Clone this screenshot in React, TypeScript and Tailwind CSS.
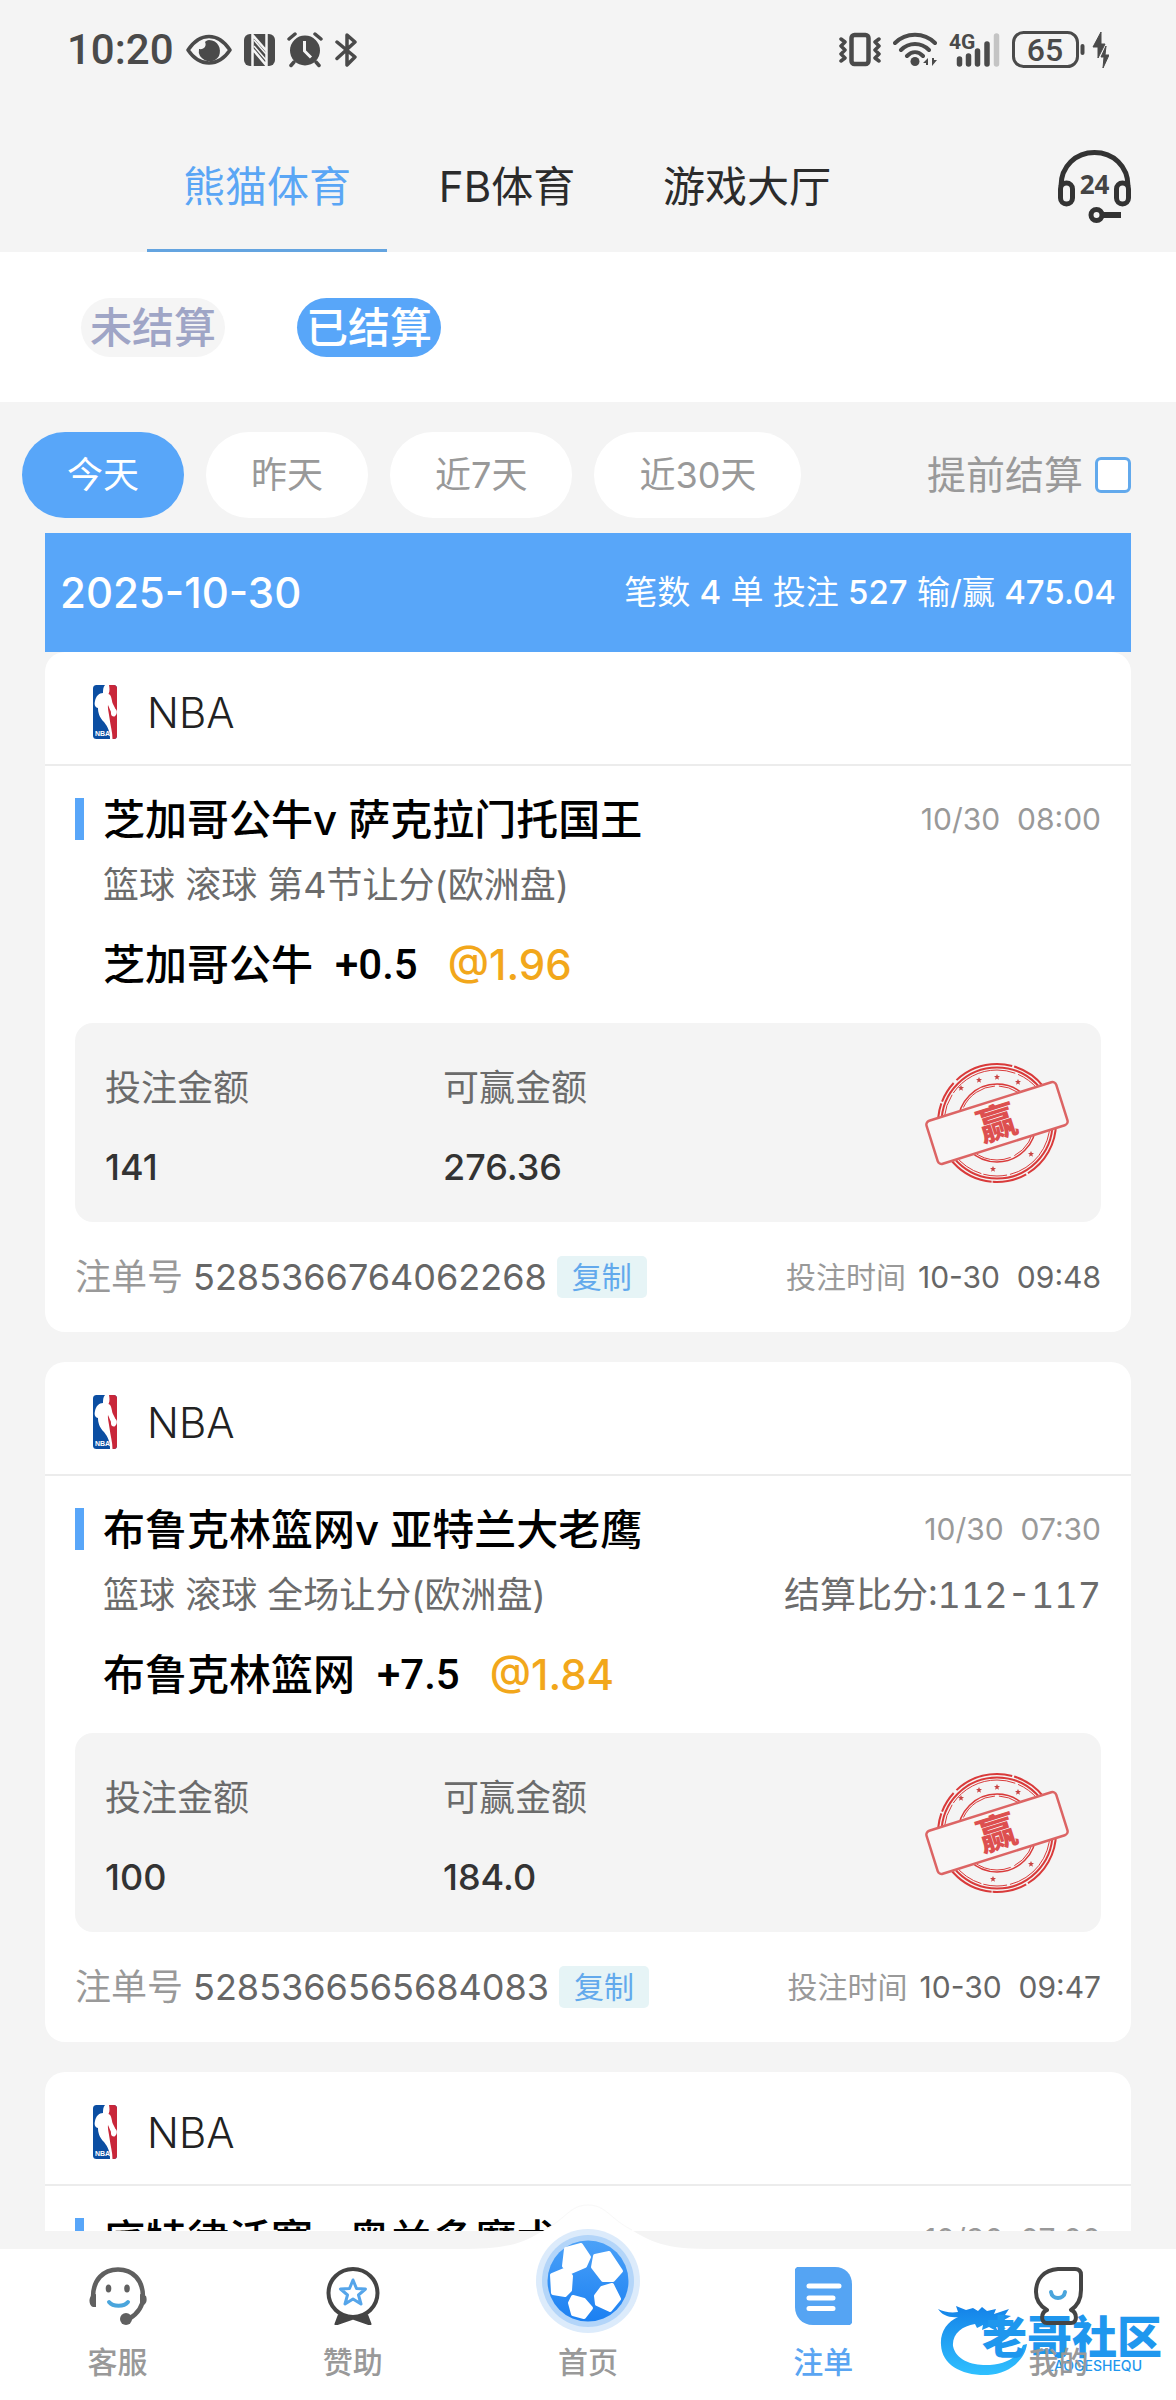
import type { ReactNode } from 'react'
import clsx from 'clsx'

interface Bet {
  id: string
  match: string
  matchTime: string
  market: string
  score?: string
  pick: string
  handicap: string
  odds: string
  stake: string
  payout: string
  placedAt: string
}

const BETS: Bet[] = [
  {
    id: '5285366764062268',
    match: '芝加哥公牛v 萨克拉门托国王',
    matchTime: '10/30  08:00',
    market: '篮球 滚球 第4节让分(欧洲盘)',
    pick: '芝加哥公牛',
    handicap: '+0.5',
    odds: '@1.96',
    stake: '141',
    payout: '276.36',
    placedAt: '10-30  09:48',
  },
  {
    id: '5285366565684083',
    match: '布鲁克林篮网v 亚特兰大老鹰',
    matchTime: '10/30  07:30',
    market: '篮球 滚球 全场让分(欧洲盘)',
    score: '结算比分:112-117',
    pick: '布鲁克林篮网',
    handicap: '+7.5',
    odds: '@1.84',
    stake: '100',
    payout: '184.0',
    placedAt: '10-30  09:47',
  },
]

const TABS = ['熊猫体育', 'FB体育', '游戏大厅']
const RANGES = ['今天', '昨天', '近7天', '近30天']

/* ---------- status bar ---------- */

function StatusBar() {
  return (
    <div className="flex h-[100px] shrink-0 items-center justify-between px-[67px] text-[#4a4a4a]">
      <div className="flex items-center gap-3">
        <span className="font-[Roboto] text-[42px] leading-none font-medium">10:20</span>
        <svg className="h-10 w-[46px]" viewBox="0 0 46 40" fill="none">
          <path d="M2 20C8 11 15 6.500 23 6.500S38 11 44 20C38 29 31 33 23 33S8 29 2 20Z" stroke="currentColor" strokeWidth="3.500" strokeLinejoin="round" />
          <path d="M19 12c2 4-1 8-6 7a10 10 0 0 0 1 7c5 7 15 7 19 0 3-7-1-16-10-16-2 0-3 1-4 2Z" fill="currentColor" />
        </svg>
        <svg className="h-10 w-[31px]" viewBox="0 0 31 40">
          <rect x="0" y="4" width="31" height="32" rx="6" fill="currentColor" />
          <path d="M8.500 36V5L23 21.500M22.500 4V35.500L8.500 19" stroke="#f4f4f4" strokeWidth="2.500" fill="none" />
          <path d="M10 10l12 14M10 16l12 14" stroke="#f4f4f4" strokeWidth="1.500" />
        </svg>
        <svg className="h-10 w-9" viewBox="0 0 36 40" fill="none">
          <circle cx="18" cy="20.500" r="15" fill="currentColor" />
          <path d="M2 9l6-5M34 9l-6-5M7 32l-3 3.500M29 32l3 3.500" stroke="currentColor" strokeWidth="3.500" strokeLinecap="round" />
          <path d="M17.500 11v10l6.500 6.500" stroke="#f4f4f4" strokeWidth="3" />
        </svg>
        <svg className="h-10 w-[22px]" viewBox="0 0 22 40" fill="none">
          <path d="M2 12l18 15-8 8V5l8 7L2 28.500" stroke="currentColor" strokeWidth="3.500" strokeLinecap="round" strokeLinejoin="round" />
        </svg>
      </div>

      <div className="flex items-center gap-3">
        <svg className="h-10 w-[42px]" viewBox="0 0 42 40" fill="none" stroke="currentColor">
          <rect x="12.500" y="5" width="17" height="29" rx="3" strokeWidth="4.500" />
          <path d="M2 9l4 3-4 4 4 4-4 4 4 4-4 3M40 9l-4 3 4 4-4 4 4 4-4 4 4 3" strokeWidth="3.500" strokeLinejoin="round" strokeLinecap="round" />
        </svg>
        <svg className="h-10 w-11" viewBox="0 0 44 40" fill="none">
          <path d="M2 13C13 2 31 2 42 13M8 20c8-8 20-8 28 0M14 26c5-5 11-5 16 0" stroke="currentColor" strokeWidth="4" strokeLinecap="round" />
          <circle cx="22" cy="31.500" r="4.500" fill="currentColor" />
          <path d="M30 33l5-5v7h-2v-2zM44 30l-5 6v-8h2v2z" fill="currentColor" />
        </svg>
        <svg className="h-10 w-[51px]" viewBox="0 0 51 40">
          <text x="0" y="19" fontSize="21" fontWeight="700" fontFamily="Roboto, sans-serif" fill="currentColor">4G</text>
          <path d="M10.500 29v5M19.500 26v8M28.500 21v13M38 14v20" stroke="currentColor" strokeWidth="5.500" strokeLinecap="round" />
          <path d="M47.500 6v28" stroke="#c4c4c4" strokeWidth="5.500" strokeLinecap="round" />
        </svg>
        <svg className="h-10 w-[97px]" viewBox="0 0 97 40">
          <rect x="1.500" y="2.500" width="64" height="34" rx="10" fill="none" stroke="currentColor" strokeWidth="3" />
          <text x="33" y="31" textAnchor="middle" fontSize="32" fontWeight="500" fontFamily="Roboto, sans-serif" fill="currentColor">65</text>
          <path d="M70.500 16v7" stroke="currentColor" strokeWidth="4" strokeLinecap="round" />
          <path d="M89 2l-8 15h5v11l7-14h-4zM94 16l-5 11h3l-1 11 6-13h-4z" fill="currentColor" stroke="currentColor" strokeWidth="1" />
        </svg>
      </div>
    </div>
  )
}

/* ---------- icons ---------- */

function Support24Icon() {
  return (
    <svg className="h-[73px] w-[73px]" viewBox="0 0 73 73" fill="none" stroke="#333">
      <path d="M3 36C3 16 18 2.500 36.500 2.500S70 16 70 36" strokeWidth="5" />
      <rect x="2.500" y="33" width="12" height="21" rx="6" strokeWidth="5" />
      <rect x="58.500" y="33" width="12" height="21" rx="6" strokeWidth="5" />
      <circle cx="38.500" cy="65" r="5.500" strokeWidth="5" />
      <path d="M45 65h18" strokeWidth="6" />
      <text x="36.500" y="44" textAnchor="middle" fontSize="26" fontWeight="700" fontFamily="'Open Sans', sans-serif" fill="#444" stroke="none">24</text>
    </svg>
  )
}

function NbaLogo() {
  return (
    <svg className="h-[54px] w-6 shrink-0" viewBox="0 0 24 54">
      <rect width="24" height="54" rx="3.500" fill="#0b4ea2" />
      <path d="M13 0h7.500A3.500 3.500 0 0 1 24 3.500v47a3.500 3.500 0 0 1-3.500 3.500H19L14 30z" fill="#c9273a" />
      <path d="M12 0h4c.500 3 1 6-.500 9 3 1 3 5 4 9l3 6c2 1 2 6-1 7.500-2 .500-4-1-3.500-4.500l-3-7c-.500 4 1 8 1.500 13 1 8 3 14 3 21h-2.500c0-7-2-12-6-17-5-5-6-10-6-14-3-1-4-3-3-7C3 11 6 8 10 8c0-3 0-6 2-8Z" fill="#fff" />
      <text x="2" y="51" fontSize="7" fontWeight="700" fontFamily="'Liberation Sans', sans-serif" fill="#fff">NBA</text>
    </svg>
  )
}

const STAR = 'M0-3 .9-1 3-.9 1.300.5 1.900 2.700 0 1.400-1.900 2.700-1.300.5-3-.9-.9-1z'
const STAMP_STARS = [[-36, -35], [-18, -43], [0, -46], [21, -41], [34, 31], [-4, 46]]

function WonStamp() {
  return (
    <svg className="h-[126px] w-36 shrink-0" viewBox="-70 -63 144 126" fill="none" stroke="#d93a3a" overflow="visible">
      <circle r="59" strokeWidth="2" strokeDasharray="60 2 35 1 90 3 14 2 22 4" />
      <circle r="55.500" strokeWidth="2" />
      <circle r="53" strokeWidth="1" strokeDasharray="70 3 24 2" />
      <circle r="39" strokeWidth="1.500" />
      <circle r="37" strokeWidth="1" strokeDasharray="40 4" />
      {STAMP_STARS.map(([x, y]) => (
        <path key={x} d={STAR} transform={`translate(${x} ${y})`} fill="#c94444" stroke="none" />
      ))}
      <g transform="rotate(-17.500)">
        <rect x="-68" y="-22.500" width="136" height="45" rx="4" fill="#f8f6f6" stroke="#dc6464" strokeWidth="2.500" />
        <text y="14" textAnchor="middle" fontSize="39" fontWeight="900" fontFamily="'Noto Sans CJK SC', sans-serif" fill="#dd4f4f" stroke="none">赢</text>
      </g>
    </svg>
  )
}

function ServiceIcon() {
  return (
    <svg className="h-[58px] w-[58px]" viewBox="0 0 58 58" fill="none">
      <path d="M4 30C4 13 14 2.500 29 2.500S54 13 54 30c0 11-6 17-14 22" stroke="#606060" strokeWidth="4.500" />
      <path d="M7 27v13H4c-4-1-5-9-1-12zM51 27v12c5 0 8-4 6-10z" fill="#606060" />
      <circle cx="37" cy="52" r="6" fill="#606060" />
      <ellipse cx="19.500" cy="21.500" rx="2.800" ry="4" fill="#606060" />
      <ellipse cx="38" cy="21.500" rx="2.800" ry="4" fill="#606060" />
      <path d="M20 35c4 5 15 5 19 0" stroke="#4aa5dc" strokeWidth="4" strokeLinecap="round" />
    </svg>
  )
}

function SponsorIcon() {
  return (
    <svg className="h-[58px] w-[54px]" viewBox="0 0 54 58" fill="none" strokeLinejoin="round">
      <ellipse cx="27" cy="26" rx="24.500" ry="24" stroke="#444" strokeWidth="4" />
      <path d="M13 49l-3 8 17-6 17 6-3-8-14 2z" fill="#444" stroke="#444" strokeWidth="3" />
      <path d="M27 13l3.500 8.500 9 .5-7 6 2.500 9-8-5-8 5 2.500-9-7-6 9-.5z" stroke="#55a5ea" strokeWidth="3" />
    </svg>
  )
}

function BallIcon() {
  return (
    <svg className="h-[104px] w-[104px] shrink-0" viewBox="0 0 104 104">
      <defs>
        <linearGradient id="ball" x1="0" y1="0" x2="0" y2="1">
          <stop offset="0" stopColor="#4ba1f8" />
          <stop offset="1" stopColor="#1b80f2" />
        </linearGradient>
      </defs>
      <circle cx="52" cy="52" r="52" fill="#dcebfb" />
      <circle cx="52" cy="52" r="46" fill="#b3d5f9" />
      <circle cx="52" cy="52" r="40.500" fill="url(#ball)" />
      <g fill="#fff" stroke="#fff" strokeWidth="4" strokeLinejoin="round">
        <path d="M30 20l15-4 8 12-4 9-14 6-7-6z" />
        <path d="M59 27l14-3 12 18-8 9H67L57 38z" />
        <path d="M16 46l12-5 7 6-1 14-5 5-12-2z" />
        <path d="M37 68l11 3 7 8-7 9-11-3-3-11z" />
        <path d="M66 59l10-3 7 14-9 11-13-6-1-8z" />
      </g>
    </svg>
  )
}

function SlipIcon() {
  return (
    <svg className="h-[58px] w-[57px]" viewBox="0 0 57 58" fill="none">
      <path d="M2 0h38c10 0 17 7 17 17v39l-2 2H18C7 58 0 50 0 40V2z" fill="#55a4f3" />
      <path d="M14 19h30M14 31h24M14 41.500h24" stroke="#fff" strokeWidth="5" strokeLinecap="round" />
    </svg>
  )
}

function ProfileIcon() {
  return (
    <svg className="h-[58px] w-[49px]" viewBox="0 0 49 58" fill="none">
      <path d="M24 2h17c4 0 6 2 6 6v15c0 9-4 16-10 20 6 2 7 13 0 13H13c-7 0-6-11 0-13C6 39 2 33 2 25 2 12 10 3 24 2Z" stroke="#444" strokeWidth="4" strokeLinejoin="round" />
      <path d="M17 25c1 8 13 8 14 0" stroke="#4aa5dc" strokeWidth="4" strokeLinecap="round" />
    </svg>
  )
}

/* ---------- bets ---------- */

function CardShell({ children }: { children: ReactNode }) {
  return (
    <article className="rounded-[20px] bg-white">
      <header className="flex h-[114px] items-center gap-[30px] border-b-2 border-[#ececec] pt-2 pl-12">
        <NbaLogo />
        <h2 className="text-[42px] font-light text-[#222]">NBA</h2>
      </header>
      <div className="px-[30px] pt-[23px] pb-[30px]">{children}</div>
    </article>
  )
}

function MatchRow({ match, time }: { match: string; time: string }) {
  return (
    <div className="flex h-[60px] items-center">
      <span className="h-[42px] w-[9px] bg-[#58a6f9]" />
      <h3 className="ml-[19px] flex-1 text-[42px] font-medium text-black">{match}</h3>
      <time className="text-[30px] whitespace-pre text-[#999]">{time}</time>
    </div>
  )
}

function BetCard({ bet }: { bet: Bet }) {
  return (
    <CardShell>
      <MatchRow match={bet.match} time={bet.matchTime} />
      <div className="mt-[11px] flex justify-between pl-7 text-[36px] leading-[50px] text-[#6b6b6b]">
        <span>{bet.market}</span>
        {bet.score && <span className="tabular-nums">{bet.score}</span>}
      </div>
      <div className="mt-[25px] flex pl-7 text-[42px] leading-[60px] font-medium text-black">
        <span>{bet.pick}</span>
        <span className="ml-[22px] font-[Roboto]">{bet.handicap}</span>
        <span className="ml-[30px] text-[#f2a71b]">{bet.odds}</span>
      </div>
      <div className="mt-7 flex items-center justify-between rounded-[18px] bg-[#f4f4f4] px-[30px]">
        <dl className="flex pt-10 pb-[30px] text-[36px] leading-[50px]">
          <div className="w-[338px]">
            <dt className="text-[#6b6b6b]">投注金额</dt>
            <dd className="mt-[29px] font-medium text-[#333]">{bet.stake}</dd>
          </div>
          <div>
            <dt className="text-[#6b6b6b]">可赢金额</dt>
            <dd className="mt-[29px] font-medium text-[#333]">{bet.payout}</dd>
          </div>
        </dl>
        <WonStamp />
      </div>
      <footer className="mt-[30px] flex h-[50px] items-center text-[36px] text-[#666]">
        <span className="text-[#999]">注单号</span>
        <span className="ml-[10px]">{bet.id}</span>
        <button type="button" className="ml-[10px] h-[42px] rounded-[5px] bg-[#e6f4f6] px-[15px] text-[30px] leading-[42px] text-[#62a9ec]">
          复制
        </button>
        <span className="ml-auto text-[30px] text-[#999]">投注时间</span>
        <time className="ml-3 text-[30px] whitespace-pre">{bet.placedAt}</time>
      </footer>
    </CardShell>
  )
}

/* ---------- bottom navigation ---------- */

interface NavItemProps {
  label: string
  icon: ReactNode
  active?: boolean
  raised?: boolean
}

function NavItem({ label, icon, active, raised }: NavItemProps) {
  return (
    <a
      href="#"
      className={clsx(
        'relative flex flex-1 flex-col items-center justify-end pb-5 text-[30px] leading-9 font-medium',
        raised ? 'gap-[11px]' : 'gap-[19px]',
        active ? 'text-[#5aa5f2]' : 'text-[#999]',
      )}
    >
      {icon}
      <span>{label}</span>
    </a>
  )
}

function Watermark() {
  return (
    <div className="pointer-events-none absolute right-[14px] bottom-6 flex h-[76px] w-[224px] justify-end text-[#1f97ee]">
      <svg className="absolute top-0 left-0 h-[76px] w-[96px]" viewBox="0 0 96 76">
        <defs>
          <linearGradient id="dragon" x1="0" y1="0" x2="0" y2="1">
            <stop offset="0" stopColor="#1482e8" />
            <stop offset="1" stopColor="#2fc0ff" />
          </linearGradient>
        </defs>
        <path
          d="M0 9c6 3 13 4 20 3l-2-6 10 4 7-2 5 3 4-4 5 4 9-2-2 5 15-5-4 6 6 1-7 4 5 3-9 1 6 5-10-2 2 5-9-5-7 3 1-5-6 3-2-4C24 26 14 34 15 46c3 15 21 20 37 19 17-1 29-9 33-20l4-1C87 60 71 74 50 75 24 76 4 65 3 45 2 32 9 22 20 17 11 18 4 15 0 9Z"
          fill="url(#dragon)"
        />
      </svg>
      <div className="relative mt-[18px] flex flex-col items-end">
        <span className="text-[45px] leading-10 font-black">老哥社区</span>
        <span className="mr-5 text-[14px] leading-4 font-medium">LAOGESHEQU</span>
      </div>
    </div>
  )
}

function BottomNav() {
  return (
    <nav className="relative flex h-[151px] shrink-0 bg-white">
      <svg className="absolute -top-[45px] left-1/2 h-[46px] w-60 -translate-x-1/2" viewBox="0 0 240 46">
        <path d="M0 45C50 45 62 34 80 24S103 1 120 1s22 13 40 23 30 21 80 21v1H0z" fill="#fff" />
        <path d="M76 26C98 15 102 1 120 1s22 14 44 25" fill="none" stroke="#f8f8f8" strokeWidth="1" />
      </svg>
      <Watermark />
      <NavItem label="客服" icon={<ServiceIcon />} />
      <NavItem label="赞助" icon={<SponsorIcon />} />
      <NavItem label="首页" icon={<BallIcon />} raised />
      <NavItem label="注单" icon={<SlipIcon />} active />
      <NavItem label="我的" icon={<ProfileIcon />} />
    </nav>
  )
}

export default function App() {
  return (
    <div
      lang="zh-CN"
      className="flex h-screen flex-col overflow-hidden bg-[#f4f4f4] font-[Inter,'Noto_Sans_CJK_SC',sans-serif]"
    >
      <StatusBar />

      <header className="flex h-[152px] shrink-0 items-start justify-between pr-[45px] pl-[147px]">
        <div className="flex h-full">
          {TABS.map((tab, i) => (
            <button
              key={tab}
              type="button"
              className={clsx(
                'w-60 border-b-[3px] pt-6 text-[42px]',
                i === 0 ? 'border-[#64a4e0] text-[#5aa6f5]' : 'border-transparent text-[#2b2b2b]',
              )}
            >
              {tab}
            </button>
          ))}
        </div>
        <button type="button" aria-label="在线客服" className="mt-[50px]">
          <Support24Icon />
        </button>
      </header>

      {/* Settled / unsettled */}
      <div className="flex h-[150px] shrink-0 items-center gap-[72px] bg-white pl-[81px] text-[42px] leading-[59px] font-medium">
        <button type="button" className="rounded-full bg-[#f5f5f5] px-[9px] text-[#9fa5c6]">未结算</button>
        <button type="button" className="rounded-full bg-[#58a6f9] px-[9px] text-white">已结算</button>
      </div>

      {/* Date range */}
      <div className="mt-[30px] flex shrink-0 items-center pr-[45px] pl-[22px]">
        <div className="flex gap-[22px]">
          {RANGES.map((range, i) => (
            <button
              key={range}
              type="button"
              className={clsx(
                'h-[86px] rounded-full px-[45px] text-[36px]',
                i === 0 ? 'bg-[#58a6f9] text-white' : 'bg-white text-[#999]',
              )}
            >
              {range}
            </button>
          ))}
        </div>
        <label className="ml-auto flex items-center gap-3 text-[39px] text-[#999]">
          提前结算
          <input type="checkbox" className="h-9 w-9 appearance-none rounded-[6px] border-[3px] border-[#62a9ec] bg-white" />
        </label>
      </div>

      <main className="mx-[45px] mt-[15px] mb-[18px] min-h-0 flex-1 overflow-hidden">
        <div className="flex h-[119px] items-center justify-between bg-[#58a6f9] px-[15px] text-white">
          <span className="text-[42px] font-medium">2025-10-30</span>
          <span className="text-[33px]">
            笔数 <b className="font-medium">4</b> 单 投注 <b className="font-medium">527</b> 输/赢{' '}
            <b className="font-medium">475.04</b>
          </span>
        </div>
        <div className="flex flex-col gap-[30px]">
          {BETS.map((bet) => (
            <BetCard key={bet.id} bet={bet} />
          ))}
          <CardShell>
            <MatchRow match="底特律活塞v 奥兰多魔术" time="10/30  07:00" />
          </CardShell>
        </div>
      </main>

      <BottomNav />
    </div>
  )
}
